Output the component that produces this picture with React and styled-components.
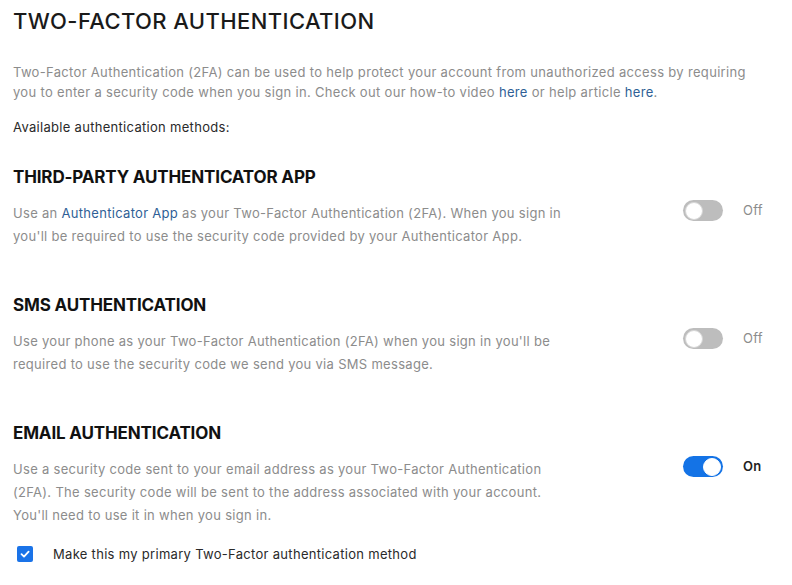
import styled, { createGlobalStyle } from "styled-components"

const GlobalStyle = createGlobalStyle`
  body {
    margin: 0;
    background: #ffffff;
    font-family: Inter, "Open Sans", sans-serif;
    color: #202020;
  }
`

const methods = [
  {
    key: "app",
    title: "THIRD-PARTY AUTHENTICATOR APP",
    on: false,
    text: () => (
      <>
        Use an <Link href="#">Authenticator App</Link> as your Two-Factor Authentication (2FA). When you sign in
        you'll be required to use the security code provided by your Authenticator App.
      </>
    ),
  },
  {
    key: "sms",
    title: "SMS AUTHENTICATION",
    on: false,
    text: () => (
      <>
        Use your phone as your Two-Factor Authentication (2FA) when you sign in you'll be required to use the
        security code we send you via SMS message.
      </>
    ),
  },
  {
    key: "email",
    title: "EMAIL AUTHENTICATION",
    on: true,
    text: () => (
      <>
        Use a security code sent to your email address as your Two-Factor Authentication (2FA). The security
        code will be sent to the address associated with your account. You'll need to use it in when you sign in.
      </>
    ),
  },
]

const App = () => {
  return (
    <Page>
      <GlobalStyle />
      <Title>TWO-FACTOR AUTHENTICATION</Title>
      <Intro>
        Two-Factor Authentication (2FA) can be used to help protect your account from unauthorized access by requiring
        you to enter a security code when you sign in. Check out our how-to video <Link href="#">here</Link> or help
        article <Link href="#">here</Link>.
      </Intro>
      <Available>Available authentication methods:</Available>
      {methods.map((m) => (
        <Method key={m.key}>
          <MethodTitle>{m.title}</MethodTitle>
          <MethodRow>
            <Desc>{m.text()}</Desc>
            <SwitchGroup>
              <Switch $on={m.on}>
                <Knob $on={m.on} />
              </Switch>
              <SwitchLabel $on={m.on}>{m.on ? "On" : "Off"}</SwitchLabel>
            </SwitchGroup>
          </MethodRow>
        </Method>
      ))}
      <CheckRow>
        <Checkbox>
          <svg width="12" height="12" viewBox="0 0 12 12">
            <path d="M2.5 6.2 L5 8.6 L9.6 3.6" fill="none" stroke="#fff" strokeWidth="1.8" strokeLinecap="round" strokeLinejoin="round" />
          </svg>
        </Checkbox>
        <CheckLabel>Make this my primary Two-Factor authentication method</CheckLabel>
      </CheckRow>
    </Page>
  )
}

export default App

const Page = styled.div`
  padding: 6px 13px 0;
`

const Title = styled.h1`
  margin: 0;
  font-size: 22px;
  font-weight: 500;
  letter-spacing: 0.4px;
  line-height: 30px;
  color: #1a1a1a;
`

const Intro = styled.p`
  margin: 26px 0 0;
  width: 748px;
  font-size: 13px;
  line-height: 20px;
  letter-spacing: 0.32px;
  color: #8c8c8c;
`

const Link = styled.a`
  color: #2f5f96;
  text-decoration: none;
`

const Available = styled.p`
  margin: 15px 0 0;
  font-size: 13px;
  line-height: 20px;
  letter-spacing: 0.3px;
  color: #2a2a2a;
`

const Method = styled.section`
  margin-top: 29px;
  & + & {
    margin-top: 46px;
  }
`

const MethodTitle = styled.h2`
  margin: 0;
  font-size: 17px;
  font-weight: 700;
  letter-spacing: -0.15px;
  line-height: 22px;
  color: #111;
`

const MethodRow = styled.div`
  display: grid;
  grid-template-columns: 670px auto;
  align-items: start;
  margin-top: 14px;
`

const Desc = styled.p`
  margin: 0;
  width: 552px;
  font-size: 13px;
  line-height: 23px;
  letter-spacing: 0.3px;
  color: #8c8c8c;
`

const SwitchGroup = styled.div`
  display: flex;
  align-items: center;
  gap: 20px;
  margin-top: -2px;
`

const Switch = styled.div`
  position: relative;
  width: 40px;
  height: 21px;
  border-radius: 11px;
  background: ${(p) => (p.$on ? "#1473e6" : "#bdbdbd")};
`

const Knob = styled.div`
  position: absolute;
  top: 1.5px;
  left: ${(p) => (p.$on ? "20px" : "2px")};
  width: 18px;
  height: 18px;
  box-sizing: border-box;
  border-radius: 50%;
  background: #fff;
  border: 1px solid ${(p) => (p.$on ? "#fff" : "#d6d6d6")};
`

const SwitchLabel = styled.span`
  font-size: 13px;
  line-height: 18px;
  letter-spacing: 0.3px;
  margin-top: -2px;
  font-weight: ${(p) => (p.$on ? 600 : 400)};
  color: ${(p) => (p.$on ? "#222" : "#8c8c8c")};
`

const CheckRow = styled.div`
  display: flex;
  align-items: center;
  gap: 20px;
  margin: 19px 0 0 4px;
`

const Checkbox = styled.div`
  width: 16px;
  height: 16px;
  border-radius: 2px;
  background: #1a73e8;
  display: flex;
  align-items: center;
  justify-content: center;
`

const CheckLabel = styled.span`
  font-size: 13px;
  letter-spacing: 0.3px;
  color: #2a2a2a;
`
